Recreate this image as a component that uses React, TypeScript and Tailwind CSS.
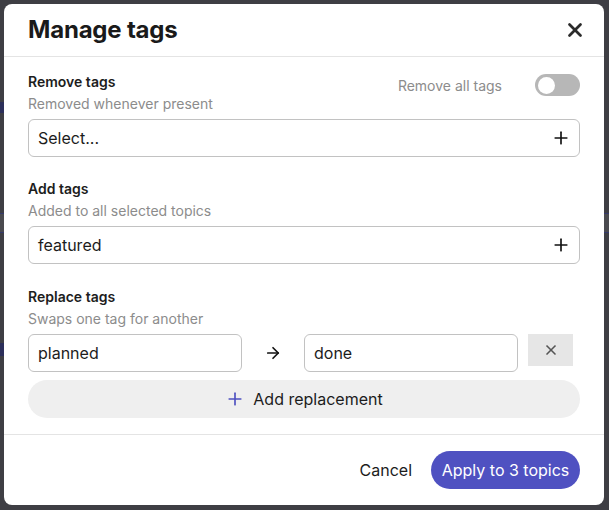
import { Plus, X, ArrowRight } from "lucide-react";

function TagInput({ value }: { value: string }) {
  return (
    <div className="flex h-[38px] items-center justify-between rounded-md border border-[#c2c2c2] bg-white pl-[9px] pr-[8px]">
      <span className="text-[16px] text-[#1c1c1c]">{value}</span>
      <Plus className="h-5 w-5 text-[#111]" strokeWidth={2} />
    </div>
  );
}

function SectionHead({ title, hint }: { title: string; hint: string }) {
  return (
    <div>
      <p className="text-[14px] font-semibold leading-5 text-[#1d1d1d]">{title}</p>
      <p className="mt-[2px] text-[14px] leading-5 text-[#8c8c8c]">{hint}</p>
    </div>
  );
}

export default function App() {
  return (
    <div
      className="relative h-[510px] w-full overflow-hidden bg-[#3e3e44]"
      style={{ fontFamily: "Inter, 'Noto Sans', sans-serif" }}
    >
      {/* dimmed page behind the dialog */}
      <div className="flex flex-col pt-[102px]">
        <div className="h-[11px] w-[10px] bg-[#2c2f5a]" />
        <div className="mt-[100px] h-[20px] border-y border-[#34396a] bg-[#4a4a4f]" />
        <div className="mt-[110px] h-[13px] w-[10px] bg-[#2c2f5a]" />
      </div>

      <div className="absolute left-[4px] top-[4px] flex h-[501px] w-[600px] flex-col rounded-lg bg-white">
        {/* header */}
        <div className="flex h-[53px] items-center justify-between border-b border-[#e4e4e4] pl-6 pr-[18px]">
          <h1 className="text-[24px] font-bold tracking-[-0.2px] text-[#1a1a1a]">Manage tags</h1>
          <X className="h-[22px] w-[22px] text-[#2b2b2b]" strokeWidth={3} />
        </div>

        {/* body */}
        <div className="flex flex-col px-6 pt-[15px] pb-[16px]">
          <div className="flex items-start justify-between">
            <SectionHead title="Remove tags" hint="Removed whenever present" />
            <div className="mt-[2px] flex items-center gap-[33px]">
              <span className="text-[14px] text-[#8c8c8c]">Remove all tags</span>
              <div className="flex h-[22px] w-[45px] items-center rounded-full bg-[#b7b7b7] px-[3px]">
                <div className="h-[17px] w-[17px] rounded-full bg-white" />
              </div>
            </div>
          </div>
          <div className="mt-[5px]">
            <TagInput value="Select..." />
          </div>

          <div className="mt-[22px]">
            <SectionHead title="Add tags" hint="Added to all selected topics" />
          </div>
          <div className="mt-[5px]">
            <TagInput value="featured" />
          </div>

          <div className="mt-[23px]">
            <SectionHead title="Replace tags" hint="Swaps one tag for another" />
          </div>
          <div className="mt-[5px] flex items-start">
            <div className="flex h-[38px] w-[214px] items-center rounded-md border border-[#c2c2c2] pl-[9px]">
              <span className="text-[16px] text-[#1c1c1c]">planned</span>
            </div>
            <div className="flex h-[38px] w-[62px] items-center justify-center">
              <ArrowRight className="h-[18px] w-[18px] text-[#111]" strokeWidth={2.25} />
            </div>
            <div className="flex h-[38px] w-[214px] items-center rounded-md border border-[#c2c2c2] pl-[9px]">
              <span className="text-[16px] text-[#1c1c1c]">done</span>
            </div>
            <div className="ml-[10px] flex h-[32px] w-[45px] items-center justify-center bg-[#e6e6e6]">
              <X className="h-[16px] w-[16px] text-[#555]" strokeWidth={2.5} />
            </div>
          </div>
          <button className="mt-[8px] flex h-[38px] items-center justify-center gap-[8px] rounded-full bg-[#efefef]">
            <Plus className="h-5 w-5 text-[#4e50c0]" strokeWidth={2} />
            <span className="text-[16px] text-[#1c1c1c]">Add replacement</span>
          </button>
        </div>

        {/* footer */}
        <div className="flex flex-1 items-center justify-end gap-[19px] border-t border-[#e4e4e4] pr-6">
          <span className="text-[16px] text-[#1c1c1c]">Cancel</span>
          <button className="flex h-[38px] w-[149px] items-center justify-center rounded-full bg-[#4f51c1] text-[16px] text-white">
            Apply to 3 topics
          </button>
        </div>
      </div>
    </div>
  );
}
